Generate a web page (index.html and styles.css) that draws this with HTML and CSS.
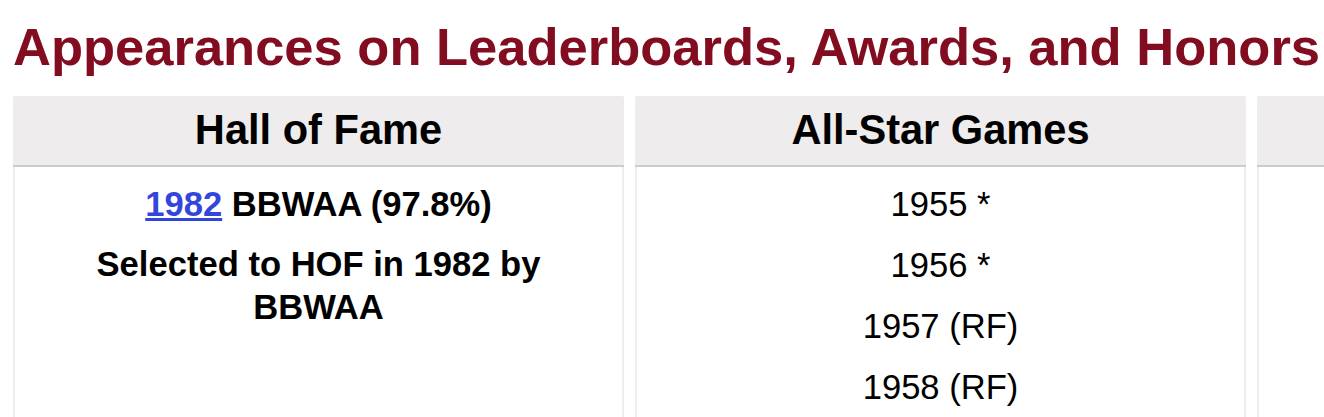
FILE: index.html
```html
<!DOCTYPE html>
<html lang="en">
<head>
    <meta charset="UTF-8">
    <meta name="viewport" content="width=device-width, initial-scale=1.0">
    <title>Appearances on Leaderboards, Awards, and Honors</title>
    <link rel="stylesheet" href="styles.css">
</head>
<body>
    <div class="section">
        <h2>Appearances on Leaderboards, Awards, and Honors</h2>
        <div class="boards">
            <div class="board">
                <div class="board-head">Hall of Fame</div>
                <div class="board-body bold">
                    <p><a href="#">1982</a> BBWAA (97.8%)</p>
                    <p>Selected to HOF in 1982 by BBWAA</p>
                </div>
            </div>
            <div class="board">
                <div class="board-head">All-Star Games</div>
                <div class="board-body">
                    <p>1955 *</p>
                    <p>1956 *</p>
                    <p>1957 (RF)</p>
                    <p>1958 (RF)</p>
                </div>
            </div>
            <div class="board">
                <div class="board-head">&nbsp;</div>
                <div class="board-body"></div>
            </div>
        </div>
    </div>
</body>
</html>
```

FILE: styles.css
```css
body {
    margin: 0;
    font-family: 'Liberation Sans', Arial, sans-serif;
    background-color: white;
    color: black;
    overflow: hidden;
}
.section {
    padding: 17px 0 0 13px;
}
h2 {
    margin: 0 0 19px 0;
    font-size: 52.5px;
    line-height: 60px;
    font-weight: bold;
    color: #820c20;
    white-space: nowrap;
}
.boards {
    display: flex;
    gap: 11px;
}
.board {
    flex: 0 0 611px;
    width: 611px;
}
.board-head {
    background-color: #eeecec;
    border-bottom: 2px solid #cccccc;
    border-radius: 2px 2px 0 0;
    padding: 10px 0 11px 0;
    text-align: center;
    font-size: 41.6px;
    line-height: 48px;
    font-weight: bold;
}
.board-body {
    border-left: 2px solid #eeeeee;
    border-right: 2px solid #eeeeee;
    padding: 16px 16px 0 16px;
    min-height: 240px;
    text-align: center;
    font-size: 34.6px;
    line-height: 43px;
}
.board-body p {
    margin: 0 0 18px 0;
}
.bold {
    font-weight: bold;
}
.bold p {
    margin-bottom: 17px;
}
a {
    color: #3346dc;
}
```
